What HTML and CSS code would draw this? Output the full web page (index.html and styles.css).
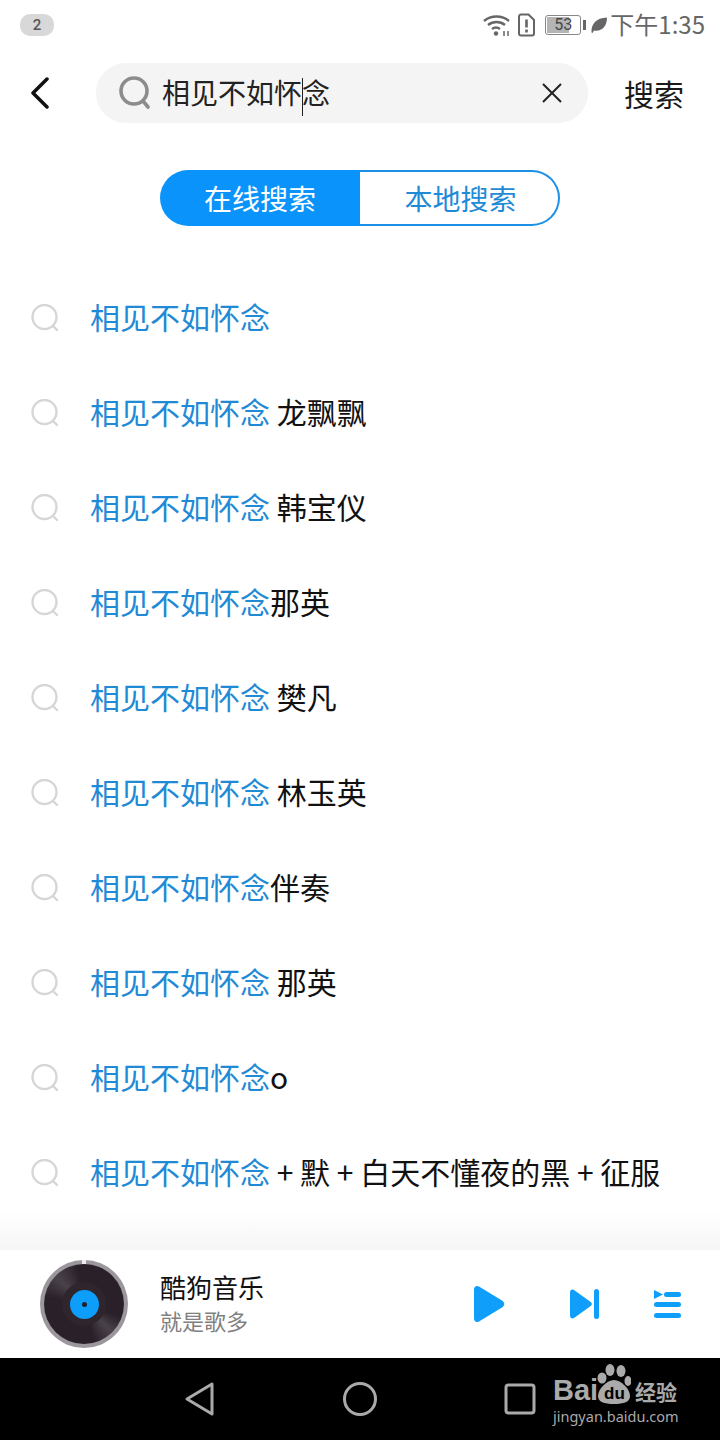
FILE: index.html
```html
<!DOCTYPE html>
<html lang="zh-CN">
<head>
  <meta charset="UTF-8">
  <title>搜索</title>
  <link rel="stylesheet" href="styles.css">
</head>
<body>
  <div class="phone">
    <!-- 状态栏 -->
    <div class="status-bar">
      <span class="badge">2</span>
      <div class="status-right">
        <svg width="28" height="24" viewBox="0 0 28 24" fill="none" stroke="#666" stroke-width="2.4">
          <path d="M1 8C8 2 19 2 26 8"/>
          <path d="M5 12C10 8 17 8 22 12"/>
          <path d="M9 16C11.500 14 14.500 14 17 16"/>
          <circle cx="13" cy="20.500" r="2.200" fill="#666" stroke="none"/>
          <path d="M21 18v5M25 18v5" stroke-width="1.500"/>
        </svg>
        <svg class="sim" width="19" height="24" viewBox="0 0 19 24" fill="none">
          <path d="M2 3.500a2 2 0 0 1 2-2h7.500L17 7v13.500a2 2 0 0 1-2 2H4a2 2 0 0 1-2-2z" stroke="#666" stroke-width="2"/>
          <path d="M9.500 6.500v8M9.500 16.500v3" stroke="#666" stroke-width="2.600"/>
        </svg>
        <div class="battery">
          <div class="battery-body"><span class="battery-level"></span><span class="battery-num">53</span></div>
          <span class="battery-tip"></span>
        </div>
        <svg class="leaf" width="18" height="18" viewBox="0 0 18 18">
          <path d="M1.500 16.500C1 8 6 2 17 1.500C17 11 11 16 4 14.500L2.500 17z" fill="#666"/>
        </svg>
        <span class="time">下午1:35</span>
      </div>
    </div>

    <!-- 搜索栏 -->
    <div class="search-head">
      <svg class="back" width="20" height="32" viewBox="0 0 20 32" fill="none" stroke="#111" stroke-width="3.500" stroke-linecap="round" stroke-linejoin="round">
        <path d="M17 2L3 16L17 30"/>
      </svg>
      <div class="search-box">
        <svg width="34" height="34" viewBox="0 0 34 34" fill="none" stroke="#8c8c8c" stroke-width="3.600" stroke-linecap="round">
          <circle cx="16" cy="15" r="13"/>
          <path d="M25 25l5 6"/>
        </svg>
        <span class="search-text">相见不如怀<span class="caret"></span>念</span>
        <svg class="clear" width="22" height="22" viewBox="0 0 22 22" stroke="#222" stroke-width="2">
          <path d="M2 2L20 20M20 2L2 20"/>
        </svg>
      </div>
      <span class="search-btn">搜索</span>
    </div>

    <!-- 切换 -->
    <div class="tabs">
      <span class="tab tab-on">在线搜索</span>
      <span class="tab tab-off">本地搜索</span>
    </div>

    <!-- 联想列表 -->
    <ul class="suggest">
      <li><svg class="s-icon" viewBox="0 0 28 28"><circle cx="13.500" cy="13" r="12"/><path d="M22 22l4 4"/></svg><span class="hit">相见不如怀念</span></li>
      <li><svg class="s-icon" viewBox="0 0 28 28"><circle cx="13.500" cy="13" r="12"/><path d="M22 22l4 4"/></svg><span class="hit">相见不如怀念</span> 龙飘飘</li>
      <li><svg class="s-icon" viewBox="0 0 28 28"><circle cx="13.500" cy="13" r="12"/><path d="M22 22l4 4"/></svg><span class="hit">相见不如怀念</span> 韩宝仪</li>
      <li><svg class="s-icon" viewBox="0 0 28 28"><circle cx="13.500" cy="13" r="12"/><path d="M22 22l4 4"/></svg><span class="hit">相见不如怀念</span>那英</li>
      <li><svg class="s-icon" viewBox="0 0 28 28"><circle cx="13.500" cy="13" r="12"/><path d="M22 22l4 4"/></svg><span class="hit">相见不如怀念</span> 樊凡</li>
      <li><svg class="s-icon" viewBox="0 0 28 28"><circle cx="13.500" cy="13" r="12"/><path d="M22 22l4 4"/></svg><span class="hit">相见不如怀念</span> 林玉英</li>
      <li><svg class="s-icon" viewBox="0 0 28 28"><circle cx="13.500" cy="13" r="12"/><path d="M22 22l4 4"/></svg><span class="hit">相见不如怀念</span>伴奏</li>
      <li><svg class="s-icon" viewBox="0 0 28 28"><circle cx="13.500" cy="13" r="12"/><path d="M22 22l4 4"/></svg><span class="hit">相见不如怀念</span> 那英</li>
      <li><svg class="s-icon" viewBox="0 0 28 28"><circle cx="13.500" cy="13" r="12"/><path d="M22 22l4 4"/></svg><span class="hit">相见不如怀念</span>o</li>
      <li><svg class="s-icon" viewBox="0 0 28 28"><circle cx="13.500" cy="13" r="12"/><path d="M22 22l4 4"/></svg><span class="hit">相见不如怀念</span> + 默 + 白天不懂夜的黑 + 征服</li>
    </ul>

    <div class="fade"></div>

    <!-- 播放条 -->
    <div class="player">
      <div class="disc">
        <div class="disc-vinyl">
          <div class="disc-hub">
            <div class="disc-label"><span class="disc-hole"></span></div>
          </div>
        </div>
        <span class="disc-tick"></span>
      </div>
      <div class="player-info">
        <div class="player-title">酷狗音乐</div>
        <div class="player-sub">就是歌多</div>
      </div>
      <div class="player-btns">
        <svg width="32" height="38" viewBox="0 0 32 38" fill="#0f9ffa"><path d="M1 4.500C1 1.500 3.500 0 6 1.500L29 15.500C32 17.500 32 20.500 29 22.500L6 36.500C3.500 38 1 36.500 1 33.500z"/></svg>
        <svg class="btn-next" width="30" height="30" viewBox="0 0 30 30" fill="#0f9ffa"><path d="M0 3.500C0 1 2 0 4 1L20 12.500C22.500 14 22.500 16 20 17.500L4 29C2 30 0 29 0 26.500z"/><rect x="24" y="0" width="5" height="30" rx="2.500"/></svg>
        <svg class="btn-list" width="28" height="28" viewBox="0 0 28 28" fill="#0f9ffa"><path d="M0 0L9 4.500L0 9z"/><rect x="10" y="2" width="17" height="5" rx="2.500"/><rect x="0" y="12" width="27" height="5" rx="2.500"/><rect x="0" y="23" width="27" height="5" rx="2.500"/></svg>
      </div>
    </div>

    <!-- 导航栏 -->
    <div class="nav-bar">
      <svg width="32" height="36" viewBox="0 0 32 36" fill="none" stroke="#aaa" stroke-width="3" stroke-linejoin="round"><path d="M28 3V33L3 18z"/></svg>
      <svg width="36" height="36" viewBox="0 0 36 36" fill="none" stroke="#aaa" stroke-width="3"><circle cx="18" cy="18" r="15.500"/></svg>
      <svg width="32" height="32" viewBox="0 0 32 32" fill="none" stroke="#aaa" stroke-width="3"><rect x="2" y="2" width="28" height="28" rx="2.500"/></svg>
    </div>

    <!-- 水印 -->
    <div class="watermark">
      <div class="wm-top">
        <span class="wm-bai">Bai</span>
        <svg class="wm-paw" width="34" height="42" viewBox="0 0 34 42" fill="#aaa">
          <ellipse cx="5" cy="15" rx="4.500" ry="5.500"/>
          <ellipse cx="13" cy="7" rx="4.500" ry="6"/>
          <ellipse cx="24" cy="8" rx="4.500" ry="6"/>
          <ellipse cx="31" cy="18" rx="3.500" ry="5"/>
          <path d="M17 17C24 17 33 26 33 33C33 39 27 41 17 41C7 41 1 39 1 33C1 26 10 17 17 17z"/>
        </svg>
        <span class="wm-du">du</span>
        <span class="wm-cn">经验</span>
      </div>
      <div class="wm-url">jingyan.baidu.com</div>
    </div>
  </div>
</body>
</html>
```
FILE: styles.css
```css
* {
  box-sizing: border-box;
}

body {
  margin: 0;
  background-color: #fff;
  color: #111;
  font-family: "Noto Sans CJK SC", "Noto Sans", sans-serif;
}

.phone {
  position: relative;
  width: 720px;
  height: 1440px;
  display: flex;
  flex-direction: column;
  overflow: hidden;
}

/* 状态栏 */
.status-bar {
  height: 50px;
  padding: 0 15px 0 20px;
  display: flex;
  justify-content: space-between;
  align-items: center;
  color: #666;
}

.badge {
  width: 34px;
  height: 22px;
  border-radius: 10px;
  background-color: #d8d8d8;
  font-family: Roboto, sans-serif;
  font-size: 15px;
  font-weight: 500;
  line-height: 22px;
  text-align: center;
  color: #555;
}

.status-right {
  display: flex;
  align-items: center;
}

.sim {
  margin-left: 6px;
}

.battery {
  display: flex;
  align-items: center;
  margin-left: 9px;
}

.battery-body {
  position: relative;
  width: 36px;
  height: 20px;
  border: 1px solid #888;
  border-radius: 3px;
  padding: 1px;
}

.battery-level {
  display: block;
  width: 68%;
  height: 100%;
  background-color: #b4b4b4;
}

.battery-num {
  position: absolute;
  top: 0;
  left: 0;
  width: 100%;
  font-family: Roboto, sans-serif;
  font-size: 16px;
  line-height: 18px;
  text-align: center;
  color: #444;
}

.battery-tip {
  width: 3px;
  height: 10px;
  margin-left: 2px;
  background-color: #666;
}

.leaf {
  margin-left: 4px;
}

.time {
  margin-left: 2px;
  margin-top: -2px;
  font-size: 24px;
  line-height: 28px;
}

/* 搜索栏 */
.search-head {
  height: 86px;
  padding-left: 30px;
  display: flex;
  align-items: center;
}

.search-box {
  width: 492px;
  height: 60px;
  margin-left: 46px;
  padding: 0 25px 0 22px;
  border-radius: 30px;
  background-color: #f4f4f4;
  display: flex;
  align-items: center;
}

.search-text {
  flex: 1;
  margin-left: 10px;
  margin-top: 2px;
  font-size: 28px;
  line-height: 40px;
  color: #222;
}

.caret {
  display: inline-block;
  width: 1px;
  height: 38px;
  margin-right: -1px;
  vertical-align: middle;
  background-color: #222;
}

.search-btn {
  margin-left: 36px;
  font-size: 30px;
  line-height: 40px;
  color: #1a1a1a;
}

/* 切换 */
.tabs {
  align-self: center;
  width: 400px;
  height: 56px;
  margin-top: 34px;
  display: flex;
}

.tab {
  font-size: 28px;
  text-align: center;
}

.tab-on {
  width: 200px;
  line-height: 56px;
  border-radius: 28px 0 0 28px;
  background-color: #0a94fb;
  color: #fff;
}

.tab-off {
  flex: 1;
  padding-left: 3px;
  line-height: 52px;
  border: 2px solid #1c8fe6;
  border-left: none;
  border-radius: 0 28px 28px 0;
  color: #1f8ad6;
}

/* 联想列表 */
.suggest {
  list-style: none;
  margin: 44px 0 0;
  padding: 0 0 0 31px;
}

.suggest li {
  height: 95px;
  padding-bottom: 4px;
  display: flex;
  align-items: center;
  font-size: 30px;
  white-space: pre;
  color: #111;
}

.s-icon {
  width: 28px;
  height: 28px;
  margin-top: 4px;
  margin-right: 31px;
  fill: none;
  stroke: #d6d6d6;
  stroke-width: 2.4;
  stroke-linecap: round;
}

.hit {
  color: #1f8ad6;
}

.fade {
  height: 40px;
  margin-top: -10px;
  background: linear-gradient(#fff, #f6f6f6);
}

/* 播放条 */
.player {
  height: 108px;
  padding-left: 40px;
  display: flex;
  align-items: center;
  background-color: #fff;
}

/* 唱片 */
.disc {
  position: relative;
  width: 88px;
  height: 88px;
  padding: 4px;
  border-radius: 50%;
  background-color: #9b979c;
}

.disc-vinyl {
  width: 80px;
  height: 80px;
  border-radius: 50%;
  display: flex;
  justify-content: center;
  align-items: center;
  background: conic-gradient(#2a202a 0deg, #2a202a 110deg, #4a424a 135deg, #2a202a 165deg, #2a202a 280deg, #4a424a 315deg, #2a202a 350deg);
}

.disc-hub {
  width: 44px;
  height: 44px;
  border-radius: 50%;
  display: flex;
  justify-content: center;
  align-items: center;
  background-color: #2e252d;
}

.disc-label {
  width: 29px;
  height: 29px;
  border-radius: 50%;
  display: flex;
  justify-content: center;
  align-items: center;
  background-color: #0d9dfa;
}

.disc-hole {
  width: 5px;
  height: 5px;
  border-radius: 50%;
  background-color: #1c2430;
}

.disc-tick {
  position: absolute;
  top: 0;
  left: 42px;
  width: 4px;
  height: 4px;
  background-color: #eee;
}

.player-info {
  margin-left: 32px;
  padding-bottom: 5px;
}

.player-title {
  font-size: 26px;
  line-height: 36px;
  color: #111;
}

.player-sub {
  font-size: 22px;
  line-height: 30px;
  color: #808080;
}

.player-btns {
  margin-left: auto;
  margin-right: 38px;
  display: flex;
  align-items: center;
}

.btn-next {
  margin-left: 65px;
}

.btn-list {
  margin-left: 54px;
}

/* 导航栏 */
.nav-bar {
  flex: 1;
  padding: 0 184px;
  display: flex;
  justify-content: space-between;
  align-items: center;
  background-color: #000;
}

/* 水印 */
.watermark {
  position: absolute;
  left: 553px;
  top: 1360px;
  width: 130px;
  color: #aaa;
}

.wm-top {
  position: relative;
  height: 47px;
}

.wm-bai {
  position: absolute;
  left: 0;
  bottom: 1px;
  font-family: "Liberation Sans", sans-serif;
  font-size: 29px;
  font-weight: 700;
  line-height: 32px;
}

.wm-paw {
  position: absolute;
  left: 44px;
  top: 3px;
}

.wm-du {
  position: absolute;
  left: 51px;
  top: 25px;
  font-family: "Liberation Sans", sans-serif;
  font-size: 17px;
  font-weight: 700;
  line-height: 18px;
  color: #000;
}

.wm-cn {
  position: absolute;
  left: 82px;
  bottom: 2px;
  font-size: 21px;
  font-weight: 700;
  line-height: 28px;
}

.wm-url {
  font-family: "Noto Sans", sans-serif;
  font-size: 14.500px;
  line-height: 18px;
}
```
